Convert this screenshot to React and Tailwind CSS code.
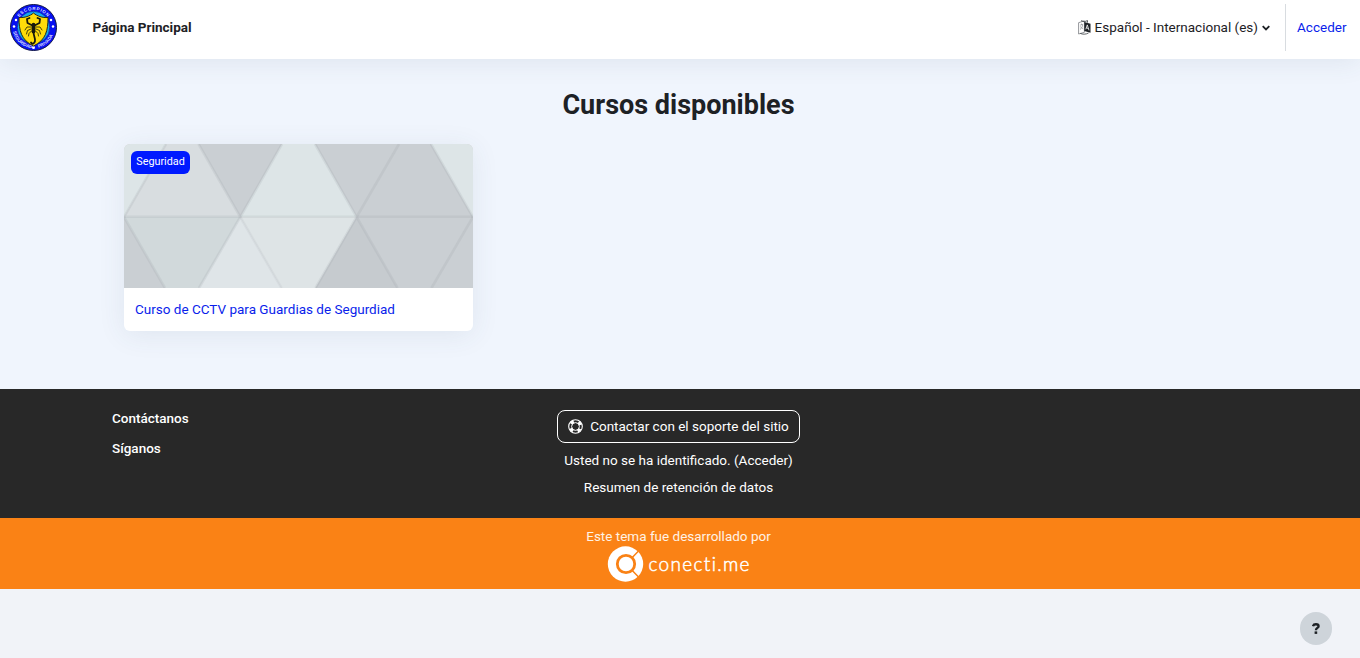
import React from 'react';

function Emblem() {
  return (
    <svg className="h-[47px] w-[47px] shrink-0" viewBox="0 0 94 94" role="img" aria-label="Escorpión">
      <defs>
        <path id="arcTop" d="M12 47a35 35 0 0 1 70 0" />
        <path id="arcBottom" d="M5.500 47a41.500 41.500 0 0 0 83 0" />
      </defs>
      <circle cx="47" cy="47" r="46" fill="#0710f2" stroke="#101548" strokeWidth="2" />
      <circle cx="47" cy="47" r="32.500" fill="#16a9ee" stroke="#10249b" strokeWidth="1.500" />
      <g fill="#d9ddff" fontFamily="Liberation Sans, sans-serif" fontWeight="700" fontSize="9">
        <text textAnchor="middle" letterSpacing="1.400"><textPath href="#arcTop" startOffset="50%">ESCORPION</textPath></text>
        <text textAnchor="middle"><textPath href="#arcBottom" startOffset="27%">SEGURIDAD</textPath></text>
        <text textAnchor="middle"><textPath href="#arcBottom" startOffset="73%">PRIVADA</textPath></text>
      </g>
      <g fill="#fff">
        <circle cx="8" cy="45" r="2.500" /><circle cx="12" cy="32" r="2.500" />
        <circle cx="86" cy="45" r="2.500" /><circle cx="82" cy="32" r="2.500" />
        <circle cx="47" cy="87" r="3" />
      </g>
      <path d="M47 18C40 24 29 28 18 27c0 26 4 45 29 57 25-12 29-31 29-57-11 1-22-3-29-9z" fill="#ffdc09" stroke="#282b17" strokeWidth="2" />
      <g fill="none" stroke="#17180c" strokeLinecap="round" strokeLinejoin="round">
        <path d="M43 42l-8-4-1-8 5-2M51 42l8-4 1-8-5-2" strokeWidth="3.600" />
        <path d="M42 46l-8 0-4 6M42 50l-7 3-2 7M43 54l-5 5-1 5M52 46l8 0 4 6M52 50l7 3 2 7M51 54l5 5 1 5" strokeWidth="1.600" />
        <path d="M47 41v14" strokeWidth="7.500" />
        <path d="M47 56c0 8 4 12 3 18-1 6-6 7-8 3" strokeWidth="3.600" />
      </g>
    </svg>
  );
}

function LanguageIcon() {
  return (
    <svg className="mr-[4px] h-[15px] w-[13px] shrink-0" viewBox="0 0 13 15">
      <path d="M.6 2.700L6.400.8v11.500L.6 14z" fill="#fff" stroke="#777b80" strokeWidth=".8" />
      <path d="M2 5.200l3-.9M3.500 3.600v1.200M4.700 4.700c-.2 2-1.100 3.700-2.700 4.800M2.400 6.400c.6 1.400 1.500 2 2.800 2.400" fill="none" stroke="#777b80" strokeWidth=".6" />
      <path d="M3 .7l3.400 1L9.500.6v2M2.300 13.400c2.200 1.100 5.600 1.100 8.200-.4" fill="none" stroke="#33383c" strokeWidth=".8" />
      <path d="M6.300 1.900l6.200 1.800v9L6.300 11z" fill="#1d2125" />
      <path d="M7.800 9.300l1.500-4.400 1.700 5.500M8.400 7.900l2 .6" fill="none" stroke="#fff" strokeWidth=".8" />
    </svg>
  );
}

function LifeRing() {
  return (
    <svg className="mr-[7px] h-[15px] w-[15px] shrink-0" viewBox="0 0 15 15" fill="none" stroke="#fff">
      <circle cx="7.5" cy="7.5" r="6.800" strokeWidth="1.100" />
      <circle cx="7.5" cy="7.5" r="3.900" strokeWidth="1" />
      <circle cx="7.5" cy="7.5" r="5.200" strokeWidth="3.200" strokeDasharray="3.270 4.900" strokeDashoffset="-2.450" />
    </svg>
  );
}

function CoursePattern() {
  return (
    <svg className="block h-[144px] w-full" viewBox="0 0 349 144" preserveAspectRatio="none">
      <rect width="349" height="144" fill="#cacfd3" />
      <path d="M0 0H42L0 73z" fill="#dde5e7" />
      <path d="M42 0h32.500L116.300 73H0z" fill="#d8dde0" />
      <path d="M158 0h33l41.600 73H116.300z" fill="#dde5e7" />
      <path d="M307 0h42v73z" fill="#dde5e7" />
      <path d="M0 73h116.300L75 144H41z" fill="#d1d9db" />
      <path d="M116.300 73L157.500 144H75z" fill="#dfe5e8" />
      <path d="M116.300 73h116.300L191.500 144h-34z" fill="#dee4e6" />
      <path d="M232.600 73L273.500 144h-82z" fill="#c6cbcf" />
      <g fill="none" stroke="#8f9699" strokeOpacity=".15" strokeWidth="2.600">
        <path d="M0 72.700H349" />
        <path d="M0 73L42 0M74.500 0l41.800 73L75 144M158 0l-41.700 73M191 0l41.600 73-41.100 71M275 0l-42.400 73 40.900 71M307 0l42 73-41.500 71M0 73l41 71" />
        <path d="M116.300 73l41.200 71" strokeOpacity=".1" />
      </g>
    </svg>
  );
}

function ConectiLogo() {
  return (
    <svg className="h-[38px] w-[144px]" viewBox="0 0 144 38" role="img">
      <circle cx="18.500" cy="19" r="17.700" fill="#fff" />
      <circle cx="19" cy="19" r="8.700" fill="none" stroke="#fa8215" strokeWidth="2.800" />
      <path d="M25.500 12.200l6.500-6.700M25.500 25.800l6.500 6.700" stroke="#fa8215" strokeWidth="1.500" />
      <text className="[font-variant-ligatures:none]" x="41.500" y="25.500" fill="#fff" fontFamily="Lato, sans-serif" fontWeight="300" fontSize="19" stroke="#fff" strokeWidth=".5" textLength="101" lengthAdjust="spacing">conecti.me</text>
    </svg>
  );
}

export default function App() {
  return (
    <div className="flex min-h-[658px] flex-col bg-[#f1f3f8] font-['Roboto',sans-serif] text-[13.5px] leading-5 text-[#1d2125]">
      <header className="z-10 flex h-[59px] items-start justify-between bg-white pt-1 pr-[13.5px] pl-[10px] shadow-[0_4px_26px_rgba(60,75,100,0.09)]">
        <div className="flex h-[47px] items-center">
          <Emblem />
          <a className="ml-[35.5px] pb-[2px] font-bold">Página Principal</a>
        </div>
        <div className="flex h-[47px] items-center">
          <LanguageIcon />
          <span className="pb-[2px]">Español - Internacional (es)</span>
          <svg className="ml-[4px] h-[6px] w-[8px]" viewBox="0 0 8 6" fill="none" stroke="#1d2125" strokeWidth="1.800"><path d="M.7 1.200L4 4.500l3.300-3.300" /></svg>
          <span className="ml-[15px] h-[47px] w-px bg-[#d8dce0]" />
          <a className="ml-[11px] pb-[2px] text-[#0a1eeb]">Acceder</a>
        </div>
      </header>
      <main className="h-[330px] bg-[#f0f5fd] px-[124px] pt-[28px]">
        <h1 className="-ml-[3px] h-[57px] text-center text-[27px] leading-[36px] font-bold">Cursos disponibles</h1>
        <article className="relative h-[187px] w-[349px] overflow-hidden rounded-[6px] bg-white shadow-[0_4px_28px_rgba(60,75,100,0.09)]">
          <CoursePattern />
          <span className="absolute top-[7px] left-[7px] flex h-[23px] w-[59px] justify-center rounded-[6px] bg-[#001aff] text-[10.8px] leading-[21px] text-white">Seguridad</span>
          <h2 className="pt-[11px] pl-[11px] text-[#0a1eeb]">Curso de CCTV para Guardias de Segurdiad</h2>
        </article>
      </main>
      <footer className="text-white">
        <div className="grid h-[129px] grid-cols-[445px_243px_1fr] bg-[#282828] pl-[112px]">
          <div className="flex flex-col gap-[10px] pt-[19px] font-medium">
            <h3>Contáctanos</h3>
            <h3>Síganos</h3>
          </div>
          <div className="flex flex-col items-center pt-[21px] whitespace-nowrap">
            <a className="flex h-[33px] w-[243px] items-center justify-center rounded-[8px] border border-white"><LifeRing /><span className="pb-[2px]">Contactar con el soporte del sitio</span></a>
            <p className="mt-[7px]">Usted no se ha identificado. (Acceder)</p>
            <p className="mt-[7px]">Resumen de retención de datos</p>
          </div>
        </div>
        <div className="flex h-[71px] flex-col items-center bg-[#fa8215] pt-2 pr-[3px]">
          <p className="h-[19px] text-[#fff2e5]">Este tema fue desarrollado por</p>
          <ConectiLogo />
        </div>
      </footer>
      <div className="flex flex-1 justify-end pt-[23px] pr-[28px]">
        <button className="flex h-[33px] w-[32px] items-center justify-center rounded-full bg-[#ced4da]" aria-label="Ayuda">
          <svg className="h-[11px] w-[8px]" viewBox="0 0 8 11" fill="none" stroke="#1d2125" strokeWidth="2.300"><path d="M1 3.300C1.500.5 6.600.7 6.600 3.200c0 1.800-2.700 1.700-2.700 4" /><path d="M3.900 8.400v2.500" strokeWidth="2.600" /></svg>
        </button>
      </div>
    </div>
  );
}
